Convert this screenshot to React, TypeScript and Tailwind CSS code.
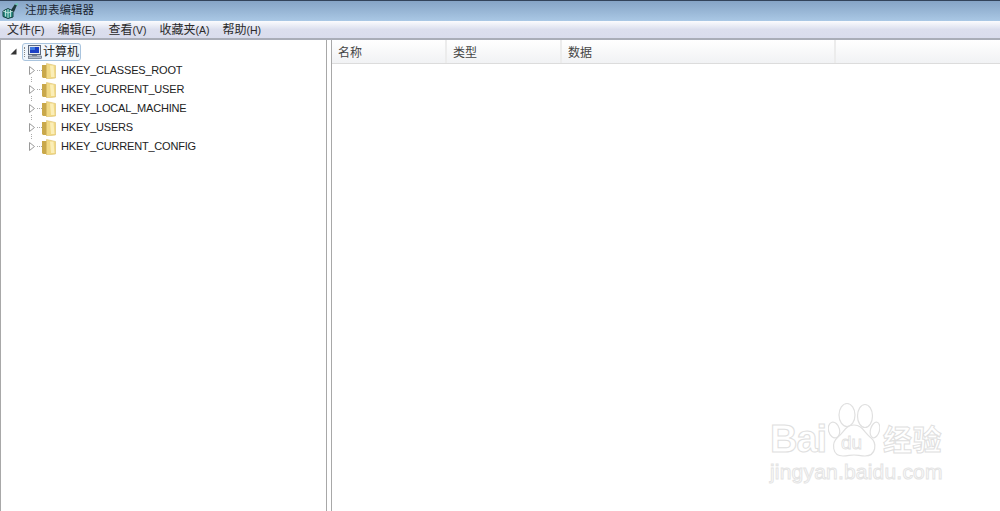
const menus = [
  ["文件", "(F)"],
  ["编辑", "(E)"],
  ["查看", "(V)"],
  ["收藏夹", "(A)"],
  ["帮助", "(H)"],
];
const keys = [
  "HKEY_CLASSES_ROOT",
  "HKEY_CURRENT_USER",
  "HKEY_LOCAL_MACHINE",
  "HKEY_USERS",
  "HKEY_CURRENT_CONFIG",
];
const columns = [
  { name: "名称", width: "w-[115px]" },
  { name: "类型", width: "w-[115px]" },
  { name: "数据", width: "w-[274px]" },
];

const font = "font-['Liberation_Sans','Noto_Sans_CJK_SC',sans-serif]";

function RegeditIcon() {
  return (
    <svg width="17" height="16" viewBox="0 0 17 16">
      <path d="M1 8l5-2.500 5 2.500v6l-5 1.500-5-2z" fill="#2f8f86" stroke="#143f3c" strokeWidth="1" />
      <path d="M6 6v9M1 8l5 2 5-2M3.500 7v6.500M8.500 7v7" fill="none" stroke="#d8f0ea" strokeWidth="0.800" />
      <path d="M9 7l4-6 2 1-3 7z" fill="#1e3a3c" />
      <path d="M12 1l4-1v3z" fill="#6fc4b4" />
    </svg>
  );
}

function ComputerIcon() {
  return (
    <svg width="15" height="14" viewBox="0 0 15 14">
      <rect x="1.500" y="0.500" width="12" height="9" fill="#e6e9ee" stroke="#5d6a80" />
      <rect x="3" y="2" width="9" height="6" fill="#1c3fc4" />
      <rect x="3" y="2" width="5" height="3" fill="#3f7ae0" />
      <rect x="5" y="10" width="5" height="1" fill="#8a93a3" />
      <rect x="1.500" y="11" width="13" height="2.500" fill="#b9c0cc" stroke="#4a5568" strokeWidth="0.600" />
    </svg>
  );
}

function FolderIcon() {
  return (
    <svg width="14" height="16" viewBox="0 0 14 16">
      <path d="M0 2h5l1 1v12H1l-1-1z" fill="#c9a84a" />
      <path d="M4.500 0.500l9 2v12.500l-9 1z" fill="#f1d985" stroke="#dcc06c" strokeWidth="0.600" />
      <path d="M8 2.500h3.500l1 11.500H9z" fill="#fbeeb8" />
    </svg>
  );
}

function Arrow() {
  return (
    <svg width="6" height="9" viewBox="0 0 6 9">
      <path d="M0.500 0.500L5.500 4.500L0.500 8.500z" fill="#fff" stroke="#9a9a9a" />
    </svg>
  );
}

function Paw() {
  return (
    <svg width="52" height="54" viewBox="0 0 52 54" className="mx-[2px]">
      <g fill="#fff" stroke="#e0e0e0" strokeWidth="1.200">
        <ellipse cx="6" cy="27" rx="5.500" ry="8" transform="rotate(-15 6 27)" />
        <ellipse cx="19" cy="12" rx="8" ry="11.500" />
        <ellipse cx="37" cy="13" rx="7.500" ry="11.500" />
        <ellipse cx="47" cy="27" rx="4.500" ry="8" transform="rotate(15 47 27)" />
        <path d="M26 22c8 0 10 7 16 12 8 6 6 19-5 19-5 0-7-1-11-1s-6 1-11 1C4 53 3 40 10 34c6-5 8-12 16-12z" />
      </g>
      <text x="13" y="46" fontSize="19" fill="none" stroke="#e0e0e0" strokeWidth="0.800">
        du
      </text>
    </svg>
  );
}

function Watermark() {
  return (
    <div className={`pointer-events-none absolute left-[770px] top-[403px] flex w-[180px] flex-col items-start ${font}`}>
      <div className="flex items-end">
        <span className="w-[56px] text-[38px] leading-[36px] font-bold tracking-[-1px] text-transparent [-webkit-text-stroke:1px_#e0e0e0]">
          Bai
        </span>
        <Paw />
        <span className="ml-[1px] text-[29px] leading-[31px] font-bold tracking-[0.500px] text-transparent [-webkit-text-stroke:1px_#e0e0e0]">
          经验
        </span>
      </div>
      <span className="mt-[3px] text-[21px] leading-[24px] tracking-[0.200px] text-transparent [-webkit-text-stroke:1px_#e4e4e4]">
        jingyan.baidu.com
      </span>
    </div>
  );
}

export default function App() {
  return (
    <div className={`relative flex h-[511px] w-[1000px] flex-col overflow-hidden bg-white text-[12px] text-[#222] ${font}`}>
      {/* Title bar */}
      <div className="flex h-[21px] shrink-0 items-center gap-[6px] border-t border-[#33435a] bg-gradient-to-b from-[#86a4c6] to-[#aac8e5] pl-[2px]">
        <RegeditIcon />
        <span className="text-[11.500px] text-[#1c2733]">注册表编辑器</span>
      </div>

      {/* Menu bar */}
      <div className="flex h-[19px] shrink-0 items-center gap-[13px] border-b-2 border-[#a9adb8] bg-gradient-to-b from-[#fbfcfe] via-[#dcdfee] via-50% to-[#d9dced] pl-[7px] text-[#2a2a2a]">
        {menus.map(([label, key]) => (
          <span key={label}>
            {label}
            <span className="text-[10.500px]">{key}</span>
          </span>
        ))}
      </div>

      <div className="flex min-h-0 flex-1">
        {/* Key tree */}
        <div className="w-[327px] shrink-0 border-r border-l border-[#a8a8a8] pt-[2px]">
          <div className="flex h-[19px] items-center">
            <svg width="7" height="7" viewBox="0 0 7 7" className="ml-[9px]">
              <path d="M6.500 0.500V6.500H0.500z" fill="#333" />
            </svg>
            <div className="ml-[5px] flex h-[18px] w-[59px] items-center rounded-[3px] border border-[#a9c4de] bg-[#f0f6fc] pl-[1px]">
              <span className="h-[10px] border-l border-dotted border-[#888]" />
              <span className="ml-[2px] flex">
                <ComputerIcon />
              </span>
              <span className="ml-[1px] text-[12px] text-[#222]">计算机</span>
            </div>
          </div>
          {keys.map((key, i) => (
            <div key={key} className="flex h-[19px] items-center">
              <span className="relative ml-[28px] flex w-[6px]">
                <Arrow />
                {i < keys.length - 1 && (
                  <span className="absolute top-[11px] left-[2px] h-[5px] border-l border-dotted border-[#aaa]" />
                )}
              </span>
              <span className="ml-[2px] w-[5px] border-t border-dotted border-[#aaa]" />
              <span className="flex w-[14px]">
                <FolderIcon />
              </span>
              <span className="ml-[5px] text-[11px] tracking-[-0.200px] text-[#222]">{key}</span>
            </div>
          ))}
        </div>

        {/* Splitter */}
        <div className="w-[4px] shrink-0 bg-white" />

        {/* Value list */}
        <div className="flex-1 border-l border-[#a8a8a8]">
          <div className="flex h-[24px] border-b border-[#dcdcdc] bg-gradient-to-b from-white to-[#f1f2f4]">
            {columns.map((c) => (
              <div
                key={c.name}
                className={`${c.width} flex items-center border-r-2 border-[#ececec] pt-[3px] pl-[6px] text-[#444]`}
              >
                {c.name}
              </div>
            ))}
          </div>
        </div>
      </div>

      <Watermark />
    </div>
  );
}
